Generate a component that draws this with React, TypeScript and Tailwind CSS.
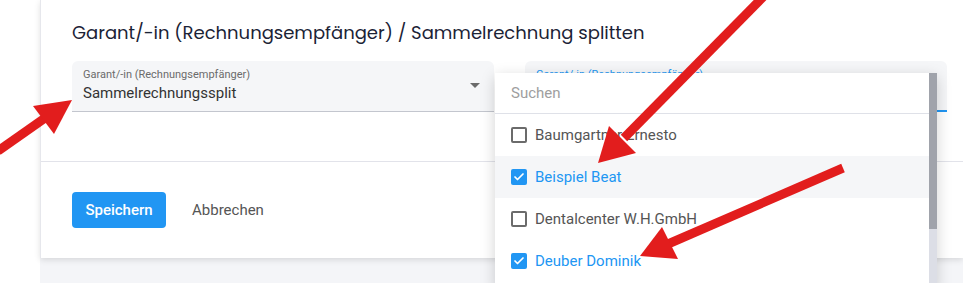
import { Check } from 'lucide-react';

const items = [
  { name: 'Baumgartner Ernesto', checked: false },
  { name: 'Beispiel Beat', checked: true, hover: true },
  { name: 'Dentalcenter W.H.GmbH', checked: false },
  { name: 'Deuber Dominik', checked: true },
];

function Box({ checked }: { checked: boolean }) {
  if (checked)
    return (
      <span className="flex h-4 w-4 shrink-0 items-center justify-center rounded-[2px] bg-[#2196f3]">
        <Check className="h-3 w-3 text-white" strokeWidth={3.5} />
      </span>
    );
  return <span className="h-4 w-4 shrink-0 rounded-[2px] border-2 border-[#6b6b6b]" />;
}

function Field({ label, value, focused }: { label: string; value?: string; focused?: boolean }) {
  return (
    <div
      className={`relative h-[51px] rounded-t-[6px] bg-[#f5f6f8] px-[11px] pt-[7px] ${
        focused ? 'border-b-2 border-[#2196f3]' : 'border-b border-[#c3c6ce]'
      }`}
    >
      <div className={`text-[11px] leading-[14px] ${focused ? 'text-[#2196f3]' : 'text-[#6b6b6b]'}`}>{label}</div>
      {value && <div className="mt-[1px] text-[15px] leading-[20px] text-[#333]">{value}</div>}
      {!focused && (
        <span className="absolute right-[14px] top-[22px] h-0 w-0 border-x-[5px] border-t-[5px] border-x-transparent border-t-[#6b6b6b]" />
      )}
    </div>
  );
}

function Arrows() {
  const red = '#e21d1d';
  return (
    <svg className="pointer-events-none absolute inset-0" width={963} height={283}>
      <line x1={-2} y1={151} x2={45} y2={118} stroke={red} strokeWidth={9} />
      <polygon points="72,100 33,106 54,134" fill={red} />
      <line x1={765} y1={-5} x2={624} y2={138} stroke={red} strokeWidth={9} />
      <polygon points="598,163 609,126 636,153" fill={red} />
      <line x1={843} y1={168} x2={668} y2={244} stroke={red} strokeWidth={9} />
      <polygon points="640,256 662,227 678,259" fill={red} />
    </svg>
  );
}

export default function App() {
  return (
    <div className="relative h-[283px] w-[963px] overflow-hidden bg-white font-['Roboto',sans-serif]">
      <div className="flex h-full">
        <div className="w-10 shrink-0 bg-white" />
        <div className="flex flex-1 flex-col bg-[#f4f5f8]">
          <div className="h-[258px] border-l border-[#e6e7ec] bg-white shadow-[0_2px_6px_rgba(0,0,0,0.12)]">
            <h1 className="pl-[31px] pt-[19px] font-['Poppins','Lato',sans-serif] text-[18px] leading-[28px] text-[#1b2336]">
              Garant/-in (Rechnungsempfänger) / Sammelrechnung splitten
            </h1>
            <div className="mt-[14px] grid grid-cols-2 gap-[31px] pl-[31px] pr-[16px]">
              <Field label="Garant/-in (Rechnungsempfänger)" value="Sammelrechnungssplit" />
              <Field label="Garant/-in (Rechnungsempfänger)" focused />
            </div>
            <div className="mt-[49px] border-t border-[#e2e3ea]" />
            <div className="flex items-center pl-[31px] pt-[30px]">
              <button className="h-9 w-[94px] rounded-[4px] bg-[#2196f3] text-[15px] font-medium text-white">
                Speichern
              </button>
              <button className="ml-[26px] text-[15px] text-[#555]">Abbrechen</button>
            </div>
          </div>
        </div>
      </div>

      <div className="absolute left-[495px] top-[73px] flex h-[215px] w-[442px] bg-white shadow-[0_4px_14px_rgba(0,0,0,0.18)]">
        <div className="flex-1">
          <div className="flex h-[41px] items-center border-b border-[#dfe1e8] pl-4 text-[15px] text-[#9e9e9e]">
            Suchen
          </div>
          {items.map(it => (
            <div
              key={it.name}
              className={`flex h-[42px] items-center gap-2 pl-4 text-[15px] ${it.hover ? 'bg-[#f5f6f8]' : ''} ${
                it.checked ? 'text-[#2196f3]' : 'text-[#555]'
              }`}
            >
              <Box checked={it.checked} />
              {it.name}
            </div>
          ))}
        </div>
        <div className="flex w-2 flex-col bg-[#dcdee6]">
          <div className="h-[156px] bg-[#a0a3ab]" />
        </div>
      </div>

      <Arrows />
    </div>
  );
}
